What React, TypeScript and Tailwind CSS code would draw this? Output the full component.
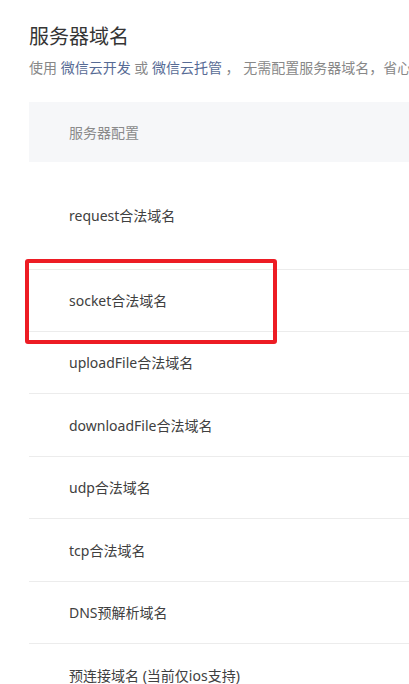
import React from "react";

const rows: { label: string; h: string }[] = [
  { label: "socket合法域名", h: "h-[62px]" },
  { label: "uploadFile合法域名", h: "h-[62px]" },
  { label: "downloadFile合法域名", h: "h-[63px]" },
  { label: "udp合法域名", h: "h-[62px]" },
  { label: "tcp合法域名", h: "h-[63px]" },
  { label: "DNS预解析域名", h: "h-[62px]" },
  { label: "预连接域名 (当前仅ios支持)", h: "h-[63px]" },
];

export default function App() {
  return (
    <div
      className="relative w-[409px] h-[684px] overflow-hidden bg-white"
      style={{ fontFamily: '"Noto Sans", "Noto Sans CJK SC", sans-serif' }}
    >
      <div className="pl-[29px] pt-[24px]">
        <h1 className="text-[20px] leading-[26px] text-[#353535] font-normal">服务器域名</h1>
        <p className="mt-[8px] text-[14px] leading-[20px] text-[#888888] whitespace-nowrap">
          使用 <span className="text-[#576b95]">微信云开发</span> 或{" "}
          <span className="text-[#576b95]">微信云托管</span> ， 无需配置服务器域名，省心省事
        </p>
        <div className="mt-[24px] w-[500px]">
          <div className="h-[60px] bg-[#f6f7f9] flex items-center pl-[40px] text-[14px] text-[#8a8a8a]">
            服务器配置
          </div>
          <div className="h-[107px] flex items-center pl-[40px] text-[14px] text-[#404040]">
            request合法域名
          </div>
          {rows.map((r) => (
            <div
              key={r.label}
              className={`${r.h} border-t border-[#ececec] flex items-center pl-[40px] text-[14px] text-[#404040]`}
            >
              {r.label}
            </div>
          ))}
        </div>
      </div>
      <div className="absolute left-[25px] top-[259px] w-[252px] h-[85px] border-[4px] border-[#ed1c24] rounded-[3px]" />
    </div>
  );
}
